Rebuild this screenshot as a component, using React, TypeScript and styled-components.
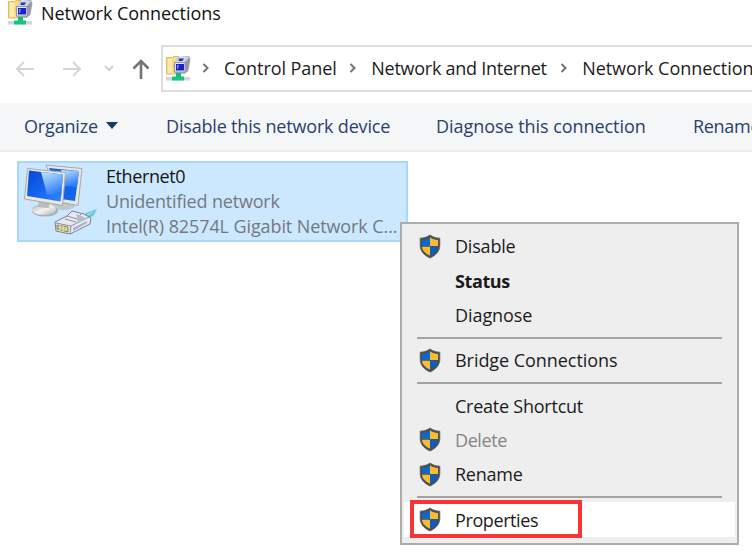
import React from 'react';
import styled, { createGlobalStyle } from 'styled-components';

const GlobalStyle = createGlobalStyle`
  body {
    margin: 0;
    background: #fff;
    overflow: hidden;
    font-family: 'Open Sans', 'Noto Sans', sans-serif;
    font-size: 18px;
    line-height: 26px;
    color: #1b1b1b;
  }
`;

const Window = styled.div`
  position: relative;
  width: 752px;
  height: 556px;
  overflow: hidden;
  display: flex;
  flex-direction: column;
  white-space: nowrap;
`;

const Text = styled.span<{ $spacing?: number }>`
  letter-spacing: ${({ $spacing = 0 }) => $spacing}px;
`;

const TitleBar = styled.header`
  height: 45px;
  display: flex;
  align-items: flex-start;
  gap: 8px;
  padding-left: 8px;
  box-sizing: border-box;
  color: #111;
`;

const NavBar = styled.nav`
  height: 47px;
  display: flex;
  align-items: center;
`;

const NavButtons = styled.div`
  width: 161px;
  height: 47px;
  flex: none;
  display: flex;
  align-items: center;
  padding-left: 15px;
  box-sizing: border-box;
`;

const NavIcon = styled.svg<{ $gap: number }>`
  flex: none;
  margin-right: ${({ $gap }) => $gap}px;
  fill: none;
`;

const AddressBar = styled.div`
  flex: none;
  width: 620px;
  height: 47px;
  box-sizing: border-box;
  border: 2px solid #dedede;
  display: flex;
  align-items: center;
  padding: 0 0 1px 3px;
`;

const Crumb = styled.div`
  display: flex;
  align-items: center;
  gap: 14px;
  margin-left: 12.5px;

  &:first-of-type {
    margin-left: 11px;
  }

  &:last-of-type {
    margin-left: 13.5px;
  }
`;

const Toolbar = styled.div`
  height: 49px;
  margin-top: 11px;
  box-sizing: border-box;
  background: #f4f6f8;
  border-bottom: 2px solid #ebebec;
  display: flex;
  align-items: center;
  padding: 0 0 2px 24px;
  color: #29426d;
`;

const Command = styled.div<{ $width: number }>`
  flex: none;
  width: ${({ $width }) => $width}px;
  display: flex;
  align-items: center;
  gap: 8px;
`;

const Content = styled.main`
  padding: 9px 0 0 17px;
`;

const Connection = styled.div`
  width: 391px;
  height: 81px;
  box-sizing: border-box;
  border: 2px solid #a6d8ff;
  background: #cce8ff;
  display: flex;
`;

const ConnectionIcon = styled.svg`
  flex: none;
  width: 87px;
  height: 77px;
`;

const Details = styled.div`
  display: flex;
  flex-direction: column;
  padding-top: 1px;
  line-height: 25px;
  color: #74787d;
`;

const ConnectionName = styled(Text)`
  color: #151515;
`;

const Menu = styled.div`
  position: absolute;
  left: 400px;
  top: 222px;
  width: 339px;
  height: 323px;
  box-sizing: border-box;
  border: 2px solid #adadad;
  background: #eee;
  padding: 5.3px 2px;
  display: flex;
  flex-direction: column;
`;

const MenuItem = styled.div<{ $bold?: boolean; $muted?: boolean; $active?: boolean }>`
  position: relative;
  height: 34.3px;
  flex: none;
  display: flex;
  align-items: center;
  font-weight: ${({ $bold }) => ($bold ? 700 : 400)};
  color: ${({ $muted }) => ($muted ? '#858585' : '#1b1b1b')};
  background: ${({ $active }) => ($active ? '#fff' : 'transparent')};
`;

const IconSlot = styled.span`
  width: 36px;
  height: 26px;
  padding-left: 15px;
  flex: none;
  display: flex;
  align-items: center;
`;

const Separator = styled.div`
  height: 2px;
  flex: none;
  margin: 4.5px 13px 4.5px 13px;
  background: #a3a3a3;
`;

const Highlight = styled.div`
  position: absolute;
  left: 6px;
  top: -2px;
  width: 172px;
  height: 38px;
  box-sizing: border-box;
  border: 4px solid #fb3335;
`;

const NetworkFolderIcon = () => (
  <svg width="25" height="25" viewBox="0 0 25 25">
    <path d="M.5 1.500h6l1.500-1h5V18H.5z" fill="#f7dc84" stroke="#dcbc66" />
    <path d="M2 2.500h4V17H2z" fill="#fdebaa" />
    <path d="M12 1l11-1 1.500 3-2 12-4 3-10-1-1-8z" fill="#a8abb8" />
    <path d="M13 1h10l-4 5H9z" fill="#d3d6df" />
    <path d="M19 6l5-4-2 12-4 3z" fill="#9598a8" />
    <path d="M8.500 6.500h10.500v9.500H8.500z" fill="#e4e7ef" stroke="#9296a6" />
    <path d="M10 8h8v6.500h-8z" fill="#1a21c8" />
    <path d="M13 2.500h5l-1.500 2.500h-4z" fill="#2530cf" />
    <path d="M11 9h2l-1 4h-1z" fill="#7a8bf4" />
    <path d="M10 17h5v4h-5z" fill="#16b979" />
    <path d="M0 21h24v3.500H0z" fill="#d4d7da" />
    <path d="M6 20.500h12v4H6z" fill="#14c67c" />
  </svg>
);

const Shield = () => (
  <svg width="22" height="25" viewBox="0 0 22 25">
    <path
      d="M11 1C8.400 3 5 4 1.200 4.200V12C1.600 17.600 5 21.200 11 24c6-2.800 9.400-6.400 9.800-12V4.200C17 4 13.600 3 11 1z"
      fill="#4a4e53"
      stroke="#5a5c5e"
      strokeWidth="0.800"
    />
    <path d="M11 3.200V12H3V6c3-.2 5.800-1.100 8-2.800z" fill="#0d67cc" />
    <path d="M11 3.200C13.200 4.900 16 5.800 19 6v6h-8z" fill="#fcbc30" />
    <path d="M3 12.700h8v9C6.200 19.300 3.400 16.600 3 12.700z" fill="#fcbc30" />
    <path d="M11 12.700h8c-.4 3.900-3.200 6.600-8 9z" fill="#0d5cc4" />
  </svg>
);

const Chevron = () => (
  <svg width="8" height="10" viewBox="0 0 8 10">
    <path d="M1.500 1l4 4-4 4" fill="none" stroke="#737373" strokeWidth="2" />
  </svg>
);

const EthernetIcon = () => (
  <ConnectionIcon viewBox="19 163 87 77">
    <defs>
      <linearGradient id="screenFront" x1="0" y1="0" x2="1" y2="1">
        <stop offset="0" stopColor="#0749cf" />
        <stop offset="0.500" stopColor="#1562ef" />
        <stop offset="1" stopColor="#2d8bff" />
      </linearGradient>
      <linearGradient id="glare" x1="0" y1="0" x2="0.400" y2="1">
        <stop offset="0" stopColor="#c9e5ff" />
        <stop offset="1" stopColor="#2a7df8" />
      </linearGradient>
      <linearGradient id="stand" x1="0" y1="0" x2="1" y2="1">
        <stop offset="0" stopColor="#a9b0b5" />
        <stop offset="0.500" stopColor="#f3f3ef" />
        <stop offset="1" stopColor="#aeb4b6" />
      </linearGradient>
    </defs>
    <ellipse cx="63" cy="206" rx="12" ry="4" fill="#bac9d3" />
    <path d="M60 198l8 1v6l-8 1z" fill="#c4c9cb" />
    <path d="M46 165l36 3.500-4 37-17-3z" fill="#e6e6e2" stroke="#aaa9a4" />
    <path d="M49 168l30 3-4 30-14-2z" fill="#1265ea" />
    <path d="M61 170l18 1-2 16-13-1z" fill="url(#glare)" />
    <ellipse cx="45" cy="211" rx="13" ry="5.500" fill="#a6b0b7" />
    <ellipse cx="44" cy="209.500" rx="12" ry="5.500" fill="url(#stand)" />
    <path d="M39 199l11 2-1 7-11-1z" fill="#b7bdc0" />
    <path d="M27.500 168.500l38 4-3 33-38-6.500z" fill="#e9e8e4" stroke="#aaa9a4" />
    <path d="M29 170.500l34 4-2.500 27-33.500-5.500z" fill="url(#screenFront)" />
    <path d="M41 172l22 2.500-1.800 22-14.200-2z" fill="url(#glare)" />
    <path d="M80 218l6-5 11-4-3 6-9 6z" fill="#65c7db" />
    <path d="M84 217l9-5" stroke="#b8f0f5" />
    <path d="M55 222l12-6 5-5 12 3 7 4-1 6-20 10-14-3z" fill="#e6e9f0" stroke="#7c8193" />
    <path d="M56 223l15 3 18-9M71 226l-1 8M67 216l10 3 4-5M65 219l11 3" fill="none" stroke="#8b90a3" />
    <path d="M76 214l8 3 1 3-7 3z" fill="#b4bbca" />
    <path d="M73 228l14-7v2l-14 8z" fill="#a9b0c0" />
    <path d="M57 225l11 2v5l-11-3z" fill="#c5c55c" stroke="#838765" />
    <path d="M60 225v5M63 226v5M66 227v4" stroke="#f4f3a9" />
  </ConnectionIcon>
);

type Item = {
  label: string;
  spacing: number;
  shield?: boolean;
  bold?: boolean;
  muted?: boolean;
  active?: boolean;
};

const menuGroups: Item[][] = [
  [
    { label: 'Disable', spacing: -0.2, shield: true },
    { label: 'Status', spacing: -0.4, bold: true },
    { label: 'Diagnose', spacing: -0.07 },
  ],
  [{ label: 'Bridge Connections', spacing: -0.05, shield: true }],
  [
    { label: 'Create Shortcut', spacing: -0.24 },
    { label: 'Delete', spacing: -0.4, shield: true, muted: true },
    { label: 'Rename', spacing: -0.25, shield: true },
  ],
  [{ label: 'Properties', spacing: -0.4, shield: true, active: true }],
];

const crumbs = [
  { label: 'Control Panel', spacing: -0.06 },
  { label: 'Network and Internet', spacing: -0.26 },
  { label: 'Network Connections', spacing: -0.05 },
];

export default function App() {
  return (
    <>
      <GlobalStyle />
      <Window>
        <TitleBar>
          <NetworkFolderIcon />
          <Text $spacing={-0.05}>Network Connections</Text>
        </TitleBar>
        <NavBar>
          <NavButtons>
            <NavIcon $gap={27} width="20" height="18" viewBox="0 0 20 18" stroke="#d5d5d5" strokeWidth="2">
              <path d="M19 9H2M9 2L2 9l7 7" />
            </NavIcon>
            <NavIcon $gap={22} width="20" height="18" viewBox="0 0 20 18" stroke="#d5d5d5" strokeWidth="2">
              <path d="M1 9h17M11 2l7 7-7 7" />
            </NavIcon>
            <NavIcon $gap={18} width="10" height="8" viewBox="0 0 10 8" stroke="#d0d0d0" strokeWidth="2">
              <path d="M1 1l4 4 4-4" />
            </NavIcon>
            <NavIcon $gap={0} width="18" height="20" viewBox="0 0 18 20" stroke="#747474" strokeWidth="2.600">
              <path d="M9 20V2M1.500 9.500L9 2l7.500 7.500" />
            </NavIcon>
          </NavButtons>
          <AddressBar>
            <NetworkFolderIcon />
            {crumbs.map((crumb) => (
              <Crumb key={crumb.label}>
                <Chevron />
                <Text $spacing={crumb.spacing}>{crumb.label}</Text>
              </Crumb>
            ))}
          </AddressBar>
        </NavBar>
        <Toolbar>
          <Command $width={142}>
            <Text $spacing={-0.16}>Organize</Text>
            <svg width="12" height="7" viewBox="0 0 12 7">
              <path d="M0 0h12L6 7z" fill="#173a67" />
            </svg>
          </Command>
          <Command $width={270}>
            <Text $spacing={-0.18}>Disable this network device</Text>
          </Command>
          <Command $width={257}>
            <Text $spacing={-0.05}>Diagnose this connection</Text>
          </Command>
          <Command $width={170}>
            <Text $spacing={-0.3}>Rename this connection</Text>
          </Command>
        </Toolbar>
        <Content>
          <Connection>
            <EthernetIcon />
            <Details>
              <ConnectionName $spacing={-0.4}>Ethernet0</ConnectionName>
              <Text $spacing={-0.18}>Unidentified network</Text>
              <Text $spacing={-0.1}>Intel(R) 82574L Gigabit Network C...</Text>
            </Details>
          </Connection>
        </Content>
        <Menu>
          {menuGroups.map((group, index) => (
            <React.Fragment key={group[0].label}>
              {index > 0 && <Separator />}
              {group.map((item) => (
                <MenuItem key={item.label} $bold={item.bold} $muted={item.muted} $active={item.active}>
                  <IconSlot>{item.shield && <Shield />}</IconSlot>
                  <Text $spacing={item.spacing}>{item.label}</Text>
                  {item.active && <Highlight />}
                </MenuItem>
              ))}
            </React.Fragment>
          ))}
        </Menu>
      </Window>
    </>
  );
}
